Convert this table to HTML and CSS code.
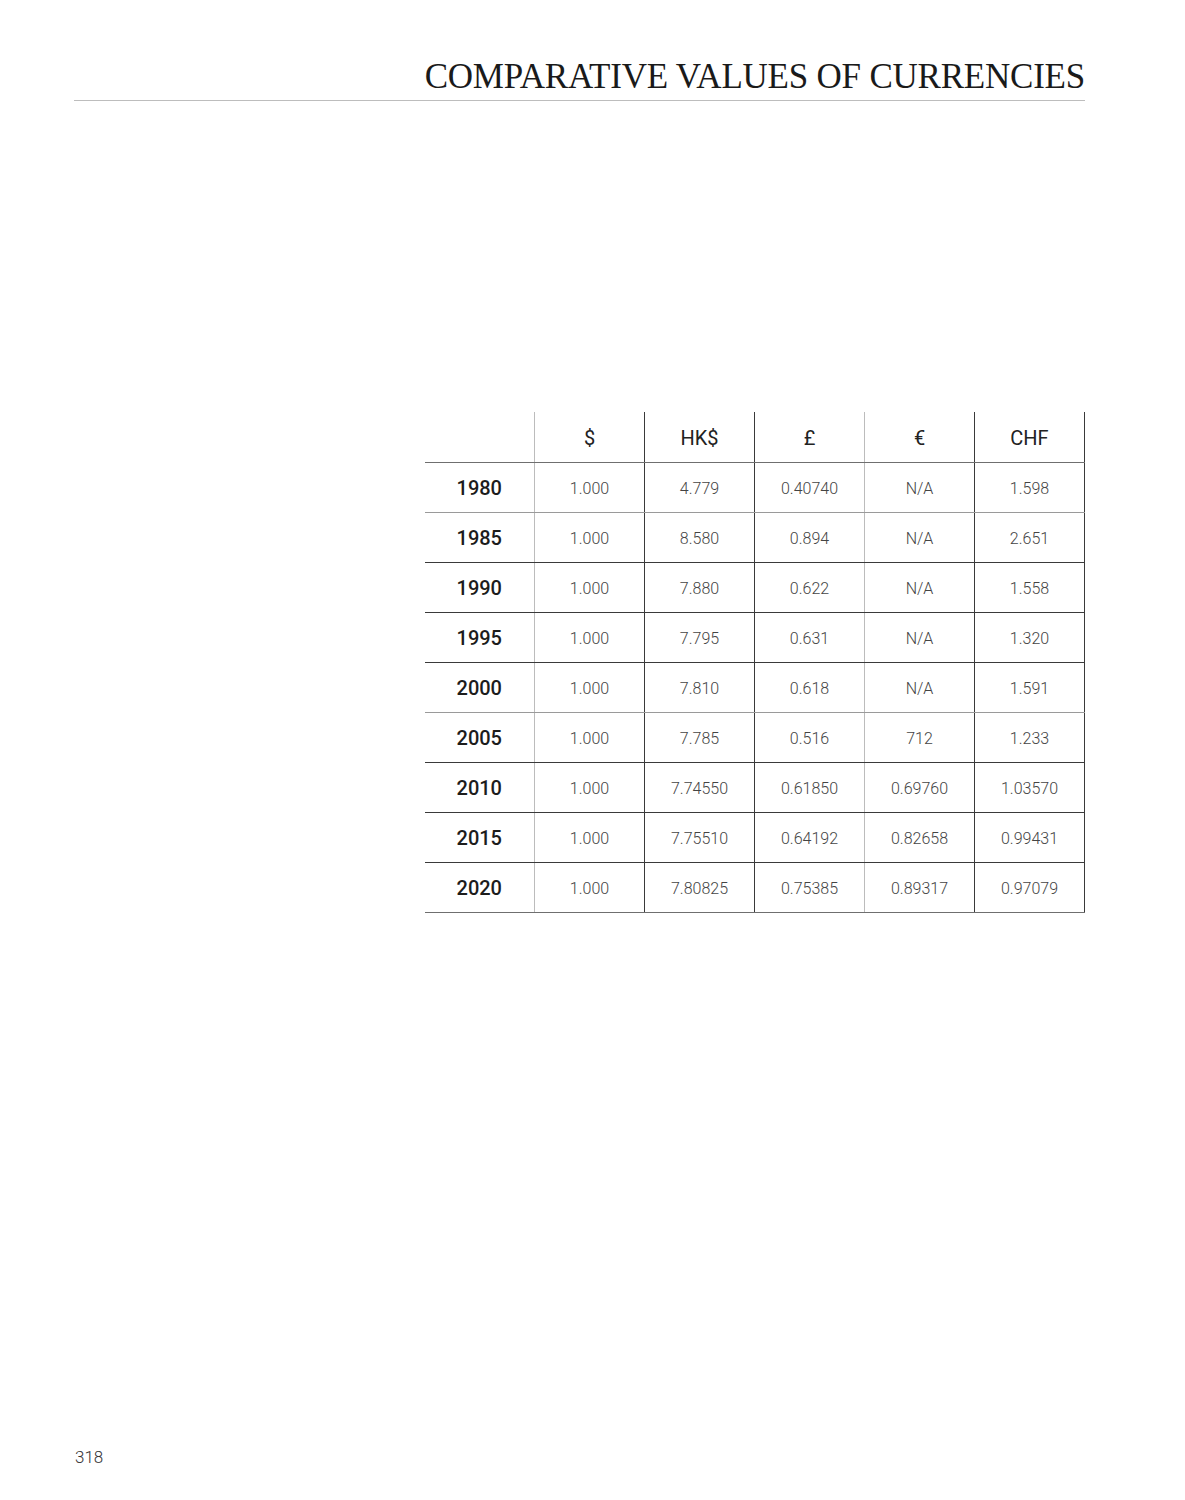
FILE: index.html
```html
<!DOCTYPE html>
<html>
<head>
<meta charset="utf-8">
<link rel="stylesheet" href="styles.css">
</head>
<body>
<div class="page">
  <header class="head">
    <h1 class="title">COMPARATIVE VALUES OF CURRENCIES</h1>
  </header>
  <main class="main">
    <table class="rates">
      <thead>
        <tr class="r-mid">
          <th class="corner"></th>
          <th class="c1">$</th>
          <th class="c2">HK$</th>
          <th class="c3">£</th>
          <th class="c4">€</th>
          <th class="c5">CHF</th>
        </tr>
      </thead>
      <tbody>
        <tr class="r-light"><th>1980</th><td class="c1">1.000</td><td class="c2">4.779</td><td class="c3">0.40740</td><td class="c4">N/A</td><td class="c5">1.598</td></tr>
        <tr class="r-dark"><th>1985</th><td class="c1">1.000</td><td class="c2">8.580</td><td class="c3">0.894</td><td class="c4">N/A</td><td class="c5">2.651</td></tr>
        <tr class="r-dark"><th>1990</th><td class="c1">1.000</td><td class="c2">7.880</td><td class="c3">0.622</td><td class="c4">N/A</td><td class="c5">1.558</td></tr>
        <tr class="r-dark"><th>1995</th><td class="c1">1.000</td><td class="c2">7.795</td><td class="c3">0.631</td><td class="c4">N/A</td><td class="c5">1.320</td></tr>
        <tr class="r-light"><th>2000</th><td class="c1">1.000</td><td class="c2">7.810</td><td class="c3">0.618</td><td class="c4">N/A</td><td class="c5">1.591</td></tr>
        <tr class="r-dark"><th>2005</th><td class="c1">1.000</td><td class="c2">7.785</td><td class="c3">0.516</td><td class="c4">712</td><td class="c5">1.233</td></tr>
        <tr class="r-dark"><th>2010</th><td class="c1">1.000</td><td class="c2">7.74550</td><td class="c3">0.61850</td><td class="c4">0.69760</td><td class="c5">1.03570</td></tr>
        <tr class="r-dark"><th>2015</th><td class="c1">1.000</td><td class="c2">7.75510</td><td class="c3">0.64192</td><td class="c4">0.82658</td><td class="c5">0.99431</td></tr>
        <tr class="r-mid"><th>2020</th><td class="c1">1.000</td><td class="c2">7.80825</td><td class="c3">0.75385</td><td class="c4">0.89317</td><td class="c5">0.97079</td></tr>
      </tbody>
    </table>
  </main>
  <footer class="foot">318</footer>
</div>
</body>
</html>
```
FILE: styles.css
```css
html, body {
  margin: 0;
  padding: 0;
  background: #ffffff;
}

.page {
  box-sizing: border-box;
  min-height: 1500px;
  padding: 0 100px 0 74px;
  display: flex;
  flex-direction: column;
}

.head {
  border-bottom: 1px solid #bdbdbd;
  display: flex;
  justify-content: flex-end;
  padding-top: 59px;
  padding-bottom: 5px;
}

.title {
  margin: 0;
  font-family: "Liberation Serif", "DejaVu Serif", serif;
  font-weight: 400;
  font-size: 35px;
  line-height: 36px;
  color: #1a1a1a;
  letter-spacing: -0.22px;
}

.main {
  display: flex;
  justify-content: flex-end;
  padding-top: 311px;
}

.rates {
  border-collapse: collapse;
  table-layout: fixed;
  width: 660px;
}

.rates th,
.rates td {
  width: 110px;
  height: 50px;
  padding: 0;
  text-align: center;
  vertical-align: middle;
  box-sizing: border-box;
}

.rates th {
  font-family: Roboto, "Liberation Sans", sans-serif;
  font-weight: 500;
  font-size: 20px;
  color: #1c1c1c;
  padding-top: 2px;
}

.rates td {
  font-family: Roboto, "Liberation Sans", sans-serif;
  font-weight: 300;
  font-size: 16px;
  color: #444444;
  padding-top: 2px;
}

.rates thead th {
  font-weight: 400;
  font-size: 20px;
  color: #222;
}

/* horizontal rules */
.r-light th, .r-light td { border-bottom: 1px solid #9a9a9a; }
.r-mid th, .r-mid td { border-bottom: 1px solid #6f6f6f; }
.r-dark th, .r-dark td { border-bottom: 1px solid #3a3a3a; }

/* vertical rules (left edge of each column + right edge) */
.rates .c1 { border-left: 1px solid #bcbcbc; }
.rates .c2 { border-left: 1px solid #3a3a3a; }
.rates .c3 { border-left: 1px solid #3a3a3a; }
.rates .c4 { border-left: 1px solid #bcbcbc; }
.rates .c5 { border-left: 1px solid #3a3a3a; border-right: 1px solid #3a3a3a; }

.foot {
  margin-top: auto;
  padding-bottom: 33px;
  font-family: Roboto, "Liberation Sans", sans-serif;
  font-weight: 300;
  font-size: 17px;
  color: #333;
  padding-left: 1px;
}
```
